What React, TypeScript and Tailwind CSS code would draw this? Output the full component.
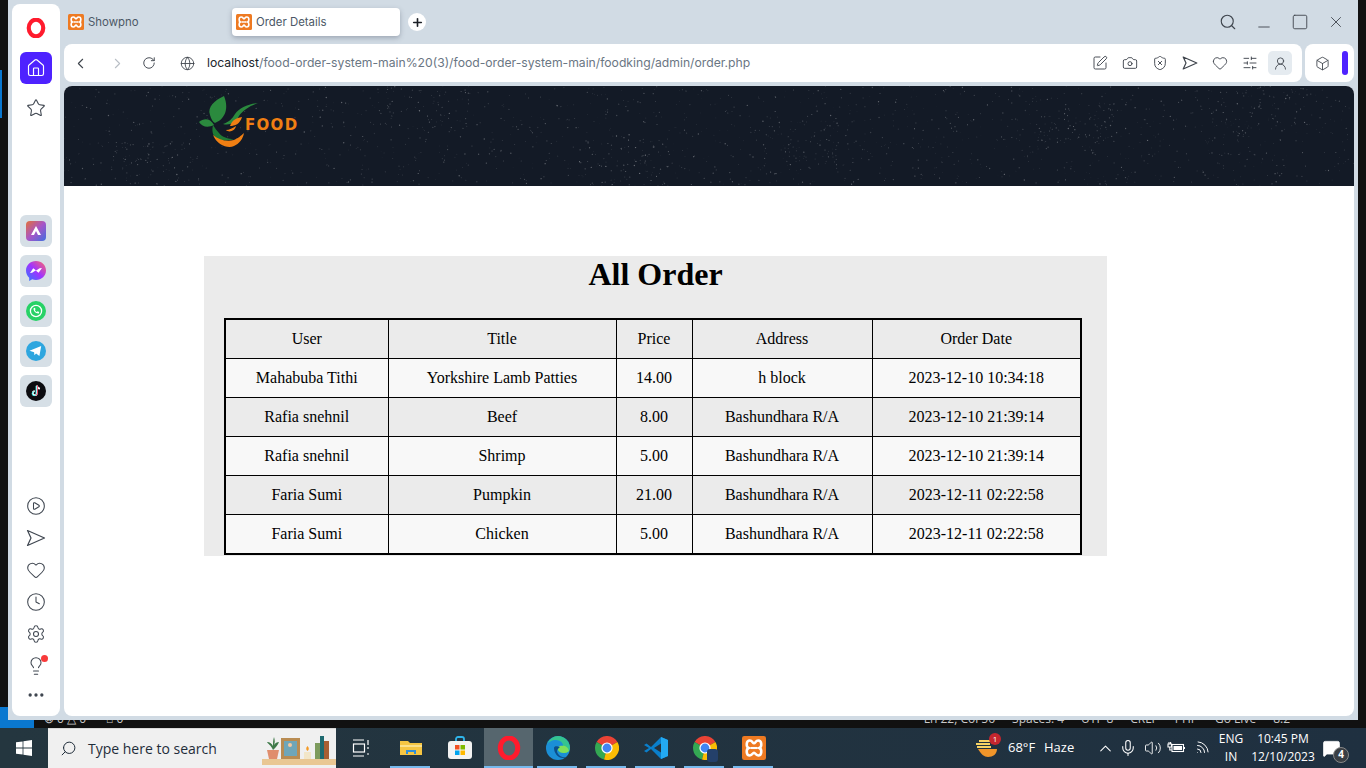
import React from "react";
import {
  ChevronLeft,
  ChevronRight,
  RotateCw,
  Globe,
  Search,
  Camera,
  ShieldX,
  Heart,
  SlidersHorizontal,
  UserRound,
  Box,
  Plus,
  Minus,
  Square,
  X,
  Star,
  Home,
  Clock,
  Settings,
  Lightbulb,
  CirclePlay,
  Ellipsis,
  SquarePen,
  ChevronUp,
  Mic,
  Volume2,
  Wifi,
  MessageSquare,
} from "lucide-react";

const orders = [
  ["Mahabuba Tithi", "Yorkshire Lamb Patties", "14.00", "h block", "2023-12-10 10:34:18"],
  ["Rafia snehnil", "Beef", "8.00", "Bashundhara R/A", "2023-12-10 21:39:14"],
  ["Rafia snehnil", "Shrimp", "5.00", "Bashundhara R/A", "2023-12-10 21:39:14"],
  ["Faria Sumi", "Pumpkin", "21.00", "Bashundhara R/A", "2023-12-11 02:22:58"],
  ["Faria Sumi", "Chicken", "5.00", "Bashundhara R/A", "2023-12-11 02:22:58"],
];

// seeded so the specks land in the same place on every run
let seed = 7;
const rnd = () => {
  seed = (seed * 16807) % 2147483647;
  return seed / 2147483647;
};
const specks = Array.from({ length: 1500 }, () => ({
  x: rnd() * 1290,
  y: rnd() * 100,
  r: 0.3 + rnd() * 0.4,
  o: 0.06 + rnd() * 0.28,
}));
// the wall texture has denser patches of dust here and there
const patches = [
  [740, 60],
  [1010, 40],
  [90, 80],
  [1190, 30],
  [360, 20],
  [560, 75],
].flatMap(([cx, cy]) =>
  Array.from({ length: 70 }, () => ({
    x: cx + (rnd() - 0.5) * 90,
    y: cy + (rnd() - 0.5) * 50,
    r: 0.3 + rnd() * 0.4,
    o: 0.1 + rnd() * 0.3,
  })),
);

const Xampp = ({ size = 16 }: { size?: number }) => (
  <svg width={size} height={size} viewBox="0 0 16 16" className="shrink-0">
    <rect width="16" height="16" rx="1.5" fill="#ee7a22" />
    <path
      d="M4.5 8C2.6 7.4 2.6 3 5.2 3 7 3 7 4.8 8 4.8S9 3 10.8 3c2.6 0 2.6 4.4.7 5 1.9.6 1.9 5-.7 5C9 13 9 11.2 8 11.2S7 13 5.2 13c-2.6 0-2.6-4.4-.7-5Z"
      fill="none"
      stroke="#fff"
      strokeWidth="1.7"
    />
    <path d="M6 8h4" stroke="#fff" strokeWidth="1.4" />
  </svg>
);

const OperaMark = ({ size = 18 }: { size?: number }) => (
  <svg width={size} height={size} viewBox="0 0 24 24">
    <ellipse cx="12" cy="12" rx="8.7" ry="10" fill="none" stroke="#ff1b2d" strokeWidth="5" />
  </svg>
);

// the flow arrow, a plain dart and not lucide's paper plane
const Dart = ({ size = 16, sw = 1.2 }: { size?: number; sw?: number }) => (
  <svg width={size} height={size} viewBox="0 0 20 20" fill="none" stroke="currentColor" strokeWidth={sw} strokeLinejoin="round">
    <path d="M1.500 2.500 18.500 10 1.500 17.500 5 10Z" />
  </svg>
);

const Logo = () => (
  <div className="flex items-start">
    <svg width="62" height="55" viewBox="0 0 62 55" className="-mr-[15px]">
      <path d="M26 1C17 5 9 12 12 20c1 4 3 7 5 8 8-3 15-12 9-27Z" fill="#2b8a3e" />
      <path d="M1 27c5-4 11-4 15 3-6 3-12 2-15-3Z" fill="#2b8a3e" />
      <path d="M60 8c-10 1-19 5-23 11-3 5-6 8-12 10 7 2 13-2 16-8 4-6 11-10 19-13Z" fill="#2b8a3e" />
      <path d="M44 22c-6 1-10 3-12 9 5 0 10-2 12-9ZM38 31c-3 2-7 4-10 4 3 3 9 1 10-4Z" fill="#f07f13" />
      <path d="M15 30c-2 8 1 14 8 15 5 1 10 0 13-1-6 0-12-2-15-6-2-2-4-5-6-8Z" fill="#1f7a34" />
      <path d="M15 40c4 10 15 14 21 11 5-2 9-7 10-13-3 3-6 5-10 7-7 2-15 0-21-5Z" fill="#f07f13" />
    </svg>
    <span className="mt-[21px] font-['DejaVu_Sans',sans-serif] text-[15px] leading-[18px] font-bold tracking-[1.3px] text-[#f07f13]">
      FOOD
    </span>
  </div>
);

const AppTile = ({ children }: { children: React.ReactNode }) => (
  <div className="flex h-8 w-8 items-center justify-center rounded-[6px] bg-[#d6dfe6]">{children}</div>
);

const Sidebar = () => (
  <aside className="flex h-[712px] w-12 flex-col items-center rounded-[8px] bg-white pt-[14px] text-[#3f4650]">
    <OperaMark size={20} />
    <div className="mt-[14px] flex h-8 w-8 items-center justify-center rounded-[6px] bg-[#4e22ff]">
      <Home size={20} strokeWidth={1.4} className="text-white" />
    </div>
    <Star size={20} strokeWidth={1.3} className="mt-[14px]" />
    <div className="mt-[97px] flex flex-col gap-2">
      <AppTile>
        <svg width="20" height="20" viewBox="0 0 20 20">
          <defs>
            <linearGradient id="aria" x1="0" y1="0" x2="1" y2="1">
              <stop offset="0" stopColor="#e2703a" />
              <stop offset="0.5" stopColor="#a855c7" />
              <stop offset="1" stopColor="#3f6fe0" />
            </linearGradient>
          </defs>
          <rect width="20" height="20" rx="4" fill="url(#aria)" />
          <path d="M5 14 10 5l5 9h-3l-2-4-2 4Z" fill="#fff" />
        </svg>
      </AppTile>
      <AppTile>
        <svg width="20" height="20" viewBox="0 0 20 20">
          <defs>
            <linearGradient id="msg" x1="0" y1="1" x2="1" y2="0">
              <stop offset="0" stopColor="#2b7bff" />
              <stop offset="0.5" stopColor="#a033ff" />
              <stop offset="1" stopColor="#ff6a68" />
            </linearGradient>
          </defs>
          <path d="M10 0C4.400 0 0 4.100 0 9.600c0 2.900 1.200 5.400 3.200 7.100V20l3-1.700c1.200.4 2.500.6 3.800.6 5.600 0 10-4.100 10-9.400C20 4.100 15.600 0 10 0Z" fill="url(#msg)" />
          <path d="m4 12 3.200-4.800 3 2.300 3.400-2.300 2.400-.2-3.400 4.800-3-2.300-3.400 2.300Z" fill="#fff" />
        </svg>
      </AppTile>
      <AppTile>
        <svg width="20" height="20" viewBox="0 0 20 20">
          <circle cx="10" cy="10" r="10" fill="#27d266" />
          <circle cx="10" cy="10" r="5.600" fill="none" stroke="#fff" strokeWidth="1.300" />
          <path d="M7.600 7.200c-.6 2.600 2.400 5.600 5.200 5.200l.4-1.400-1.600-.8-.7.7c-1-.4-1.600-1-2-2l.7-.7-.7-1.500Z" fill="#fff" />
        </svg>
      </AppTile>
      <AppTile>
        <svg width="20" height="20" viewBox="0 0 20 20">
          <circle cx="10" cy="10" r="10" fill="#2ea6df" />
          <path d="M3.500 9.800 15.200 5l-1.800 10-3.300-2.400-1.700 1.700-.3-3-4.600-1.500Z" fill="#fff" />
        </svg>
      </AppTile>
      <AppTile>
        <svg width="20" height="20" viewBox="0 0 20 20">
          <circle cx="10" cy="10" r="10" fill="#0c0c10" />
          <path d="M10.800 4.500v7.700a2 2 0 1 1-2-2M10.800 4.500c.3 2 1.500 3 3.200 3.200" fill="none" stroke="#fff" strokeWidth="1.800" />
          <path d="M10.100 5v7.700a2 2 0 1 1-2-2" fill="none" stroke="#25f4ee" strokeWidth="0.8" />
          <path d="M11.500 4.500v7.700a2 2 0 0 1-2 2" fill="none" stroke="#fe2c55" strokeWidth="0.8" />
        </svg>
      </AppTile>
    </div>
    <div className="mt-[89px] flex flex-col items-center gap-3">
      <CirclePlay size={20} strokeWidth={1.25} />
      <Dart size={20} />
      <Heart size={20} strokeWidth={1.25} />
      <Clock size={20} strokeWidth={1.25} />
      <Settings size={20} strokeWidth={1.25} />
      <div className="relative">
        <Lightbulb size={20} strokeWidth={1.25} />
        <span className="absolute -top-[1px] right-[-2px] h-[7px] w-[7px] rounded-full bg-[#f83a3a]" />
      </div>
      <Ellipsis size={20} strokeWidth={2} className="-mt-[3px]" />
    </div>
  </aside>
);

const TabBar = () => (
  <div className="flex h-8 items-center pt-1 text-[11.4px] text-[#4c5866] font-['Inter',sans-serif]">
    <div className="flex w-[168px] items-center gap-1 pl-1">
      <Xampp />
      <span className="pt-[2px]">Showpno</span>
    </div>
    <div className="flex h-7 w-[168px] items-center gap-1 rounded-[4px] bg-white pl-1 shadow-[0_2px_5px_rgba(60,70,90,0.35)]">
      <Xampp />
      <span className="pt-[2px]">Order Details</span>
    </div>
    <div className="ml-2 flex h-[18px] w-[18px] items-center justify-center rounded-full bg-white">
      <Plus size={13} strokeWidth={3} className="text-[#1b1f25]" />
    </div>
    <div className="ml-auto flex items-center gap-[18px] pr-[9px] text-[#3e444c]">
      <Search size={18} strokeWidth={1.5} />
      <Minus size={18} strokeWidth={1.2} className="translate-y-[5px]" />
      <Square size={18} strokeWidth={1.2} />
      <X size={18} strokeWidth={1.2} />
    </div>
  </div>
);

const AddressBar = () => (
  <div className="mt-2 flex h-[38px] gap-[3px]">
    <div className="flex w-[1238px] items-center rounded-[8px] bg-white pr-[10px] text-[#3e444c]">
      <ChevronLeft size={17} strokeWidth={1.5} className="ml-2" />
      <ChevronRight size={17} strokeWidth={1.5} className="ml-5 text-[#b8bec5]" />
      <RotateCw size={14} strokeWidth={1.6} className="ml-4" />
      <Globe size={15} strokeWidth={1.4} className="ml-6" />
      <span className="ml-3 pt-[1px] font-['Inter',sans-serif] text-[12.18px] text-[#6a7683]">
        <span className="text-[#20252b]">localhost</span>/food-order-system-main%20(3)/food-order-system-main/foodking/admin/order.php
      </span>
      <div className="ml-auto flex items-center gap-[14px]">
        <SquarePen size={16} strokeWidth={1.4} />
        <Camera size={16} strokeWidth={1.4} />
        <ShieldX size={16} strokeWidth={1.4} />
        <Dart size={16} sw={1.5} />
        <Heart size={16} strokeWidth={1.4} />
        <SlidersHorizontal size={16} strokeWidth={1.4} />
        <div className="-ml-1 flex h-6 w-6 items-center justify-center rounded-[5px] bg-[#e5ebf0]">
          <UserRound size={15} strokeWidth={1.4} />
        </div>
      </div>
    </div>
    <div className="flex w-[49px] items-center rounded-[8px] bg-white pl-[10px] text-[#3e444c]">
      <Box size={15} strokeWidth={1.4} />
      <span className="ml-[12px] h-6 w-[6px] rounded-[3px] bg-[#4e22ff]" />
    </div>
  </div>
);

const OrderTable = () => (
  <table className="ml-5 mt-[25px] w-[856px] table-fixed border-collapse border-2 border-black text-center text-[16px] text-black">
    <colgroup>
      <col className="w-[163px]" />
      <col className="w-[228px]" />
      <col className="w-[76px]" />
      <col className="w-[180px]" />
      <col className="w-[209px]" />
    </colgroup>
    <thead>
      <tr className="h-[39px]">
        {["User", "Title", "Price", "Address", "Order Date"].map((h) => (
          <th key={h} className="border border-black font-normal">
            {h}
          </th>
        ))}
      </tr>
    </thead>
    <tbody>
      {orders.map((row, i) => (
        <tr key={i} className={`${i === 4 ? "h-[40px]" : "h-[39px]"} ${i % 2 === 0 ? "bg-[#f8f8f8]" : ""}`}>
          {row.map((cell, j) => (
            <td key={j} className="border border-black">
              {cell}
            </td>
          ))}
        </tr>
      ))}
    </tbody>
  </table>
);

const Page = () => (
  <main className="mt-1 h-[630px] w-[1290px] overflow-hidden rounded-[8px] bg-white font-['Liberation_Serif',serif]">
    <header className="relative h-[100px] bg-[#131a26] pl-[134px] pt-[9px]">
      <svg width="1290" height="100" className="absolute left-0 top-0">
        {[...specks, ...patches].map((s, i) => (
          <circle key={i} cx={s.x} cy={s.y} r={s.r} fill="#fff" opacity={s.o} />
        ))}
      </svg>
      <div className="relative">
        <Logo />
      </div>
    </header>
    <section className="ml-[140px] mt-[70px] h-[300px] w-[903px] bg-[#ebebeb]">
      <h2 className="text-center text-[32px] leading-[37px] font-bold text-black">All Order</h2>
      <OrderTable />
    </section>
  </main>
);

const Slot = ({ children, on, active }: { children: React.ReactNode; on?: boolean; active?: boolean }) => (
  <div className={`relative flex h-10 w-[49px] items-center justify-center ${active ? "bg-[#56666e]" : ""}`}>
    {children}
    {on && <span className={`absolute bottom-0 h-[2px] bg-[#76b9ed] ${active ? "inset-x-0" : "left-1 right-[5px]"}`} />}
  </div>
);

const ChromeIcon = () => (
  <svg width="24" height="24" viewBox="0 0 24 24">
    <path d="M12 12 1.600 6A12 12 0 0 1 22.400 6Z" fill="#ea4335" />
    <path d="M12 12 1.600 6A12 12 0 0 0 9 23.600Z" fill="#34a853" />
    <path d="M12 12 22.400 6A12 12 0 0 1 9 23.600Z" fill="#fbbc04" />
    <circle cx="12" cy="12" r="5.600" fill="#fff" />
    <circle cx="12" cy="12" r="4.400" fill="#4285f4" />
  </svg>
);

const Taskbar = () => (
  <footer className="flex h-10 items-center bg-gradient-to-r from-[#24363f] to-[#1f3040] font-['Open_Sans',sans-serif] text-white">
    <div className="flex w-12 justify-center">
      <svg width="16" height="16" viewBox="0 0 16 16" fill="#fff">
        <path d="M0 2.300 6.600 1.400v6.200H0ZM7.400 1.300 16 0v7.600H7.400ZM0 8.400h6.600v6.200L0 13.700ZM7.400 8.400H16V16l-8.600-1.300Z" />
      </svg>
    </div>
    <div className="flex h-10 w-[288px] items-center overflow-hidden border-t border-[#d8d8d8] bg-[#f0f0f0] pl-3 text-[#1f2d3a]">
      <Search size={17} strokeWidth={1.4} className="-scale-x-100" />
      <span className="ml-[11px] text-[14px]">Type here to search</span>
      <svg width="74" height="32" viewBox="0 0 74 32" className="ml-auto mt-1">
        <rect x="0" y="24" width="74" height="6" fill="#e9c793" />
        <path d="M5 15h12l-2 9H7Z" fill="#e08e6d" />
        <path d="M11 15C9 10 6 9 5 7c3 0 5 2 6 4 0-3 0-6 1-9 1 3 1 6 0 8 1-2 3-3 5-3-1 3-3 5-6 8Z" fill="#3f7a4a" />
        <rect x="19" y="3" width="19" height="21" fill="#b98c52" />
        <rect x="22" y="6" width="13" height="15" fill="#6fa6b8" />
        <circle cx="28" cy="10" r="2" fill="#f6c9a0" />
        <rect x="42" y="17" width="7" height="7" fill="#f2e6c8" />
        <path d="M45.500 11c2 2 1.500 4 0 5-1.500-1-2-3 0-5Z" fill="#f49a25" />
        <rect x="53" y="8" width="5" height="16" fill="#7d9b5d" />
        <rect x="58" y="1" width="4" height="23" fill="#1f6a70" />
        <rect x="62" y="6" width="5" height="18" fill="#a85f33" />
      </svg>
    </div>
    <div className="ml-[1px] flex">
      <Slot>
        <svg width="18" height="18" viewBox="0 0 18 18" fill="none" stroke="#fff" strokeWidth="1.2" className="-translate-x-[1px]">
          <path d="M1 1h11M1 17h11M16 1v5M16 8v2" />
          <rect x="1.500" y="5" width="11" height="8" />
          <path d="M15 15h2" />
        </svg>
      </Slot>
      <Slot on>
        <svg width="22" height="18" viewBox="0 0 22 18">
          <path d="M0 2h8l2 2h12v12H0Z" fill="#f5c542" />
          <path d="M0 6h22v2H0Z" fill="#fbe08a" />
          <path d="M6 15v-4h10v4h-2v-2H8v2Z" fill="#2f8fd8" />
        </svg>
      </Slot>
      <Slot>
        <svg width="24" height="24" viewBox="0 0 24 24">
          <path d="M8 7V3a2 2 0 0 1 2-2h4a2 2 0 0 1 2 2v4" fill="none" stroke="#2fb4e9" strokeWidth="1.800" />
          <rect y="5" width="24" height="18" rx="3" fill="#f3f3f3" />
          <rect x="7" y="9" width="4.500" height="4.500" fill="#f25022" />
          <rect x="12.500" y="9" width="4.500" height="4.500" fill="#7fba00" />
          <rect x="7" y="14.500" width="4.500" height="4.500" fill="#00a4ef" />
          <rect x="12.500" y="14.500" width="4.500" height="4.500" fill="#ffb900" />
        </svg>
      </Slot>
      <Slot on active>
        <OperaMark size={24} />
      </Slot>
      <Slot on>
        <svg width="24" height="24" viewBox="0 0 24 24">
          <circle cx="12" cy="12" r="12" fill="#1b8fd6" />
          <path d="M1 9C3 3 8 0 12 0c6 0 12 5 12 12 0 3-3 5-6 5-3 0-5-1-6-3 0-3 5-2 5-5 0-2-3-5-7-5-4 0-8 2-9 5Z" fill="#35c48f" />
          <path d="M12 14c-2-4 3-5 7-4 2 1 3 2 4 5-1 1-3 2-5 2-3 0-5-1-6-3Z" fill="#7fe05a" />
          <path d="M8 12c0 5 4 10 9 10 1 0 2 0 2-1-4 1-8-3-8-6 0-2 2-3 3-4-3-1-6-1-6 1Z" fill="#0c4f8a" />
        </svg>
      </Slot>
      <Slot on>
        <ChromeIcon />
      </Slot>
      <Slot on>
        <svg width="24" height="24" viewBox="0 0 24 24">
          <path d="M17 1 7 11 2.500 7.500 0 9l5 3-5 3 2.500 1.500L7 13l10 10 7-3V4Z" fill="#0a7fcb" />
          <path d="M17 1v22l7-3V4Z" fill="#23a9f2" />
          <path d="M17 7.500 10 12l7 4.500Z" fill="#24313c" />
        </svg>
      </Slot>
      <Slot on>
        <div className="relative">
          <ChromeIcon />
          <span className="absolute bottom-[-2px] right-[-1px] h-[13px] w-[11px] rounded-[3px] bg-[#24406a]" />
        </div>
      </Slot>
      <Slot on>
        <Xampp size={24} />
      </Slot>
    </div>
    <div className="ml-auto flex items-center text-[13px]">
      <div className="relative mr-[11px]">
        <svg width="22" height="20" viewBox="0 0 22 20">
          <path d="M3 11h19c0 5-4 8-9 8-4 0-7-3-10-8Z" fill="#f0952a" />
          <path d="M4 3h11M1 6h14M2 9h14" stroke="#f6d365" strokeWidth="1.800" />
        </svg>
        <span className="absolute -right-[4px] -top-[5px] flex h-[12px] w-[12px] items-center justify-center rounded-full bg-[#c4262e] text-[8px] leading-none">
          1
        </span>
      </div>
      <span className="w-[36px]">68°F</span>
      <span className="w-[40px]">Haze</span>
      <ChevronUp size={19} strokeWidth={1.3} className="ml-[12px]" />
      <Mic size={18} strokeWidth={1.4} className="ml-1" />
      <Volume2 size={18} strokeWidth={1.2} className="ml-[7px]" />
      <svg width="18" height="18" viewBox="0 0 18 18" fill="none" stroke="#fff" strokeWidth="1.100" className="ml-[5px]">
        <path d="M1 5h3.500v3H1ZM2 3v2M3.600 3v2M2.800 8v3h2" />
        <rect x="5" y="5.500" width="11.500" height="7" />
        <rect x="6.500" y="7" width="8.500" height="4" fill="#fff" stroke="none" />
        <path d="M17.500 8v2" />
      </svg>
      <Wifi size={17} strokeWidth={1.3} className="ml-2 rotate-45" />
      <div className="ml-[5px] w-[32px] text-center text-[12px] leading-[18px]">
        ENG
        <br />
        IN
      </div>
      <div className="ml-[2px] w-[68px] text-center text-[12px] leading-[18px] whitespace-nowrap">
        10:45 PM
        <br />
        12/10/2023
      </div>
      <div className="relative ml-[5px] mr-[25px]">
        <MessageSquare size={19} fill="#fff" strokeWidth={1} />
        <span className="absolute -bottom-[5px] -right-[8px] flex h-4 w-4 items-center justify-center rounded-full border border-[#888] bg-[#3a3f44] text-[10px] font-bold">
          4
        </span>
      </div>
    </div>
  </footer>
);

export default function App() {
  return (
    <div className="flex h-[768px] w-[1366px] flex-col overflow-hidden bg-[#111]">
      <div className="flex h-[720px]">
        <div className="flex w-2 flex-col bg-[#111] pt-[70px]">
          <div className="h-12 w-[2px] bg-[#0a78d0]" />
          <div className="mt-auto h-[13px] bg-[#0a78d0]" />
        </div>
        <div className="flex w-[1350px] gap-1 bg-[#d1dbe4] px-1 pt-1">
          <Sidebar />
          <div className="w-[1290px]">
            <TabBar />
            <AddressBar />
            <Page />
          </div>
        </div>
      </div>
      <div className="flex h-2 overflow-hidden bg-[#111] text-[12px] text-[#c8c8c8] font-['Open_Sans',sans-serif]">
        <div className="h-2 w-[34px] bg-[#0a78d0]" />
        <div className="ml-[10px] flex -translate-y-[9px] gap-5 whitespace-nowrap leading-[16px]">
          <span>⊗ 0 △ 0</span>
          <span>⌂ 0</span>
        </div>
        <div className="ml-auto flex -translate-y-[9px] gap-[17px] pr-[76px] whitespace-nowrap leading-[16px]">
          <span>Ln 22, Col 56</span>
          <span>Spaces: 4</span>
          <span>UTF-8</span>
          <span>CRLF</span>
          <span>PHP</span>
          <span>Go Live</span>
          <span>8.2</span>
        </div>
      </div>
      <Taskbar />
    </div>
  );
}
